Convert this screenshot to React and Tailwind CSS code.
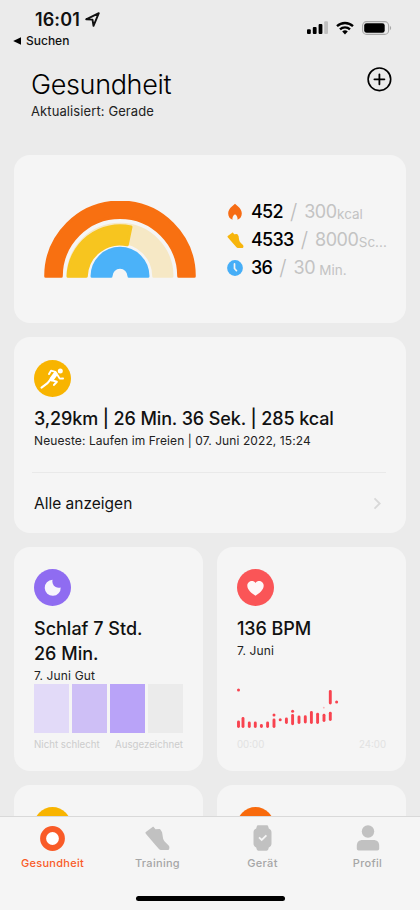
import React from "react";

const GOALS = [
  { id: "kcal", Icon: FlameIcon, value: "452", goal: "300", unit: "kcal" },
  { id: "steps", Icon: StepsIcon, value: "4533", goal: "8000", unit: "Sc..." },
  { id: "time", Icon: ClockIcon, value: "36", goal: "30", unit: "\u00a0Min." },
];

const SLEEP_COLORS = ["bg-[#e2daf8]", "bg-[#cebff6]", "bg-[#b9a3f8]", "bg-[#ebebeb]"];

// [x, top, bottom] of each pulse range
const PULSE = [
  [1.5, 34, 38.5], [6, 30.5, 38.5], [12.3, 35, 38.5], [18.3, 35, 38.5],
  [24.4, 37.5, 38.5], [30.6, 35, 38.5], [37, 32, 38.5], [49.4, 31, 34.5],
  [55.6, 27.5, 35.8], [62, 29, 34.5], [68.3, 28.8, 34], [74.4, 24.5, 34.5],
  [80.6, 26.2, 34.5], [87, 27.2, 32.5], [93.3, 25.2, 31.5], [93.3, 3.5, 15],
];

const PULSE_DOTS = [[1.5, 2], [37, 27], [43.2, 31.7], [55.6, 23.3], [99.6, 14]];

const TABS = [
  { id: "health", label: "Gesundheit", Icon: RingIcon, active: true },
  { id: "training", label: "Training", Icon: ShoeIcon },
  { id: "device", label: "Gerät", Icon: WatchIcon },
  { id: "profile", label: "Profil", Icon: PersonIcon },
];

function FlameIcon() {
  return (
    <svg width="16" height="18" viewBox="0 0 16 18">
      <path d="M8 .8c2.800 2.400 6.800 5.300 6.800 9.700 0 3-1.600 5.300-4.300 6.300.4-2.300-.5-4.300-2.500-5.600-2 1.300-2.900 3.300-2.500 5.600-2.700-1-4.300-3.300-4.300-6.300C1.200 6.100 5.200 3.200 8 .8z" fill="#f66c14" />
    </svg>
  );
}

function ShoePath() {
  return (
    <path
      d="M.8 5.800 7.300.9c.4-.3.900-.2 1.200.2l1.600 2 3.800-.3c.5 0 .8.200 1 .7l1.500 2.400.8 5.200c.2 1.500.8 2.800 1.900 4l3.600 3.600c.6.600.8 1.200.7 2l-.2 1.300c-.1.600-.5.900-1.100.9h-6.700c-.8 0-1.500-.3-2-.9l-3.200-3.500L.8 7.400c-.4-.5-.5-1.200 0-1.600z"
      fill="currentColor"
    />
  );
}

function StepsIcon() {
  return (
    <svg width="17" height="16" viewBox="0 0 24 23" className="text-[#f7b50c]">
      <ShoePath />
    </svg>
  );
}

function ShoeIcon() {
  return (
    <svg width="25" height="24" viewBox="0 0 24 23">
      <ShoePath />
    </svg>
  );
}

function ClockIcon() {
  return (
    <svg width="16" height="16" viewBox="0 0 16 16">
      <circle cx="8" cy="8" r="7.900" fill="#46aef7" />
      <path d="M7.500 3.900v4.600l2 2.200" fill="none" stroke="#f5f5f5" strokeWidth="1.700" strokeLinecap="round" strokeLinejoin="round" />
    </svg>
  );
}

function RingIcon() {
  return (
    <svg width="25" height="25" viewBox="0 0 25 25">
      <circle cx="12.500" cy="12.500" r="9.400" fill="#fff" stroke="currentColor" strokeWidth="6" />
    </svg>
  );
}

function WatchIcon() {
  return (
    <svg width="19" height="26" viewBox="0 0 19 26">
      <path d="M5.500.3h8c1 0 1.500.5 1.800 1.400l.5 1.800c1.700.7 2.700 2 2.700 3.900v11.200c0 1.900-1 3.200-2.700 3.900l-.5 1.800c-.3.900-.8 1.400-1.800 1.400h-8c-1 0-1.500-.5-1.800-1.400l-.5-1.800C1.500 21.800.5 20.500.5 18.600V7.400c0-1.900 1-3.200 2.700-3.900l.5-1.800C4 .8 4.500.3 5.500.3z" fill="currentColor" />
      <path d="m6 12.300 2.700 2.600 4.700-4.600" fill="none" stroke="#f5f5f5" strokeWidth="1.800" />
    </svg>
  );
}

function PersonIcon() {
  return (
    <svg width="24" height="26" viewBox="0 0 24 26">
      <circle cx="12" cy="6.500" r="6.200" fill="currentColor" />
      <path d="M.8 21c0-4 2-6 6-6h10.400c4 0 6 2 6 6v2.500c0 1.200-.7 1.900-1.900 1.900H2.700c-1.200 0-1.900-.7-1.900-1.900z" fill="currentColor" />
    </svg>
  );
}

function StatusBar() {
  return (
    <div className="flex items-start justify-between pt-[9px] pl-[13px] pr-[28px]">
      <div>
        <div className="flex h-[21px] items-center gap-[5px] pl-[22px]">
          <span className="text-[18px] leading-[21px] font-semibold tracking-[0.1px]">16:01</span>
          <svg width="15" height="15" viewBox="0 0 15 15">
            <path d="M1.200 7.300 13.800 1.200 8.500 13.800 7.500 7.600z" fill="none" stroke="#111" strokeWidth="1.900" strokeLinejoin="round" />
          </svg>
        </div>
        <div className="flex h-[21px] items-center gap-[5px]">
          <svg width="8" height="8" viewBox="0 0 8 8">
            <path d="M8 .2v7.600L.2 4z" />
          </svg>
          <span className="text-[12px] leading-[21px] font-medium">Suchen</span>
        </div>
      </div>
      <div className="flex h-[38px] items-center gap-[8px]">
        <svg width="21" height="14" viewBox="0 0 21 14">
          <rect x="0" y="8.300" width="3.800" height="4.700" rx="1" />
          <rect x="5.800" y="6" width="3.800" height="7" rx="1" />
          <rect x="11.600" y="3" width="3.800" height="10" rx="1" />
          <rect x="17.200" y="0.300" width="3.800" height="12.700" rx="1" fill="#c0c0c0" />
        </svg>
        <svg width="18" height="14" viewBox="0 0 18 14">
          <g fill="none" stroke="#000" strokeWidth="2.300">
            <path d="M1 5.200a11.600 11.600 0 0 1 16 0" />
            <path d="M4 8.400a7.200 7.200 0 0 1 10 0" />
          </g>
          <path d="M6.200 10.500a4.200 4.200 0 0 1 5.600 0L9 13.400z" />
        </svg>
        <svg width="30" height="14" viewBox="0 0 30 14">
          <rect x="0.600" y="0.600" width="26" height="12.800" rx="4" fill="none" stroke="#a8a8a8" strokeWidth="1.100" />
          <rect x="2.200" y="2.200" width="20.500" height="9.600" rx="2.400" />
          <path d="M27.900 4.800v4.400c1.700-.8 1.700-3.600 0-4.400z" fill="#a8a8a8" />
        </svg>
      </div>
    </div>
  );
}

function Header() {
  return (
    <header className="flex items-start justify-between pt-[17px] pr-[28px] pl-[31px]">
      <div className="pt-px">
        <h1 className="text-[27px] leading-[32px] font-light tracking-[-0.35px] text-black">Gesundheit</h1>
        <p className="text-[13px] leading-[21px] tracking-[0.1px] text-[#222]">Aktualisiert: Gerade</p>
      </div>
      <svg width="26" height="26" viewBox="0 0 26 26" fill="none" stroke="#000" strokeLinecap="round" className="-mt-[2px]">
        <circle cx="13.400" cy="13.300" r="11.300" strokeWidth="1.600" />
        <path d="M13.400 8.300v10M8.400 13.300h10" strokeWidth="1.800" />
      </svg>
    </header>
  );
}

function Rainbow() {
  return (
    <svg width="154" height="78" viewBox="-77 -76.800 154 78" strokeWidth="3" strokeLinejoin="round">
      <path d="M-74.300-1.500A74.300 74.300 0 0 1 74.300-1.500H58.700A58.700 58.700 0 0 0-58.700-1.500z" fill="#f87011" stroke="#f87011" />
      <path d="M-52-1.500A52 52 0 0 1 52-1.500H33.700A33.700 33.700 0 0 0-33.700-1.500z" fill="#f6e8c5" stroke="#f6e8c5" />
      <path d="M-52-1.500A52 52 0 0 1 11-50.800L7.300-33A33.700 33.700 0 0 0-33.700-1.500z" fill="#f7c51f" stroke="#f7c51f" />
      <path d="M-28-1.500A28 28 0 0 1 28-1.500H9A9 9 0 0 0-9-1.500z" fill="#4bb2f9" stroke="#4bb2f9" />
    </svg>
  );
}

function ActivityCard() {
  return (
    <section className="flex h-[168px] items-center rounded-[16px] bg-[#f5f5f5] pt-[2px] pl-[29px]">
      <Rainbow />
      <div className="ml-[29px]">
        {GOALS.map(({ id, Icon, value, goal, unit }) => (
          <div key={id} className="flex h-[28px] items-center text-[18px] leading-[28px] whitespace-nowrap">
            <span className="flex w-[18px] justify-center"><Icon /></span>
            <span className="ml-[7px] font-medium tracking-[-0.7px] text-black">{value}</span>
            <span className="ml-[7px] text-[21px] font-light text-[#bcbcbc]">/</span>
            <span className="ml-[7px] tracking-[-0.5px] text-[#c3c3c3]">{goal}</span>
            <span className="ml-[0.5px] pt-[3px] text-[13.5px] text-[#c3c3c3]">{unit}</span>
          </div>
        ))}
      </div>
    </section>
  );
}

function WorkoutCard() {
  return (
    <section className="h-[196px] rounded-[16px] bg-[#f5f5f5] pt-[23px] pr-[20px] pl-[20px]">
      <svg width="37" height="37" viewBox="0.500 0.500 37 37">
        <circle cx="19" cy="19" r="18.500" fill="#f8b400" />
        <g fill="none" stroke="#fff" strokeLinecap="round" strokeLinejoin="round">
          <path d="M22 14.500 18.300 19.500" strokeWidth="4.600" />
          <path d="M22 12.300 17.500 11.200 15.500 14.600" strokeWidth="1.900" />
          <path d="m24 15.500 2.200 3.600 3.400-.1" strokeWidth="1.800" />
          <path d="m18.500 20.800 4.800 1.400-2.800 3.200" strokeWidth="2.100" />
          <path d="m17 20-3 3.600-6 4.600" strokeWidth="2.100" />
        </g>
        <circle cx="26.800" cy="11.600" r="2.500" fill="#fff" />
      </svg>
      <h2 className="mt-[9px] text-[18px] leading-[26px] font-medium tracking-[-0.12px] whitespace-nowrap text-[#111]">3,29km | 26 Min. 36 Sek. | 285 kcal</h2>
      <p className="text-[12px] leading-[18px] tracking-[0.09px] whitespace-nowrap text-[#222]">Neueste: Laufen im Freien | 07. Juni 2022, 15:24</p>
      <div className="mt-[22px] -ml-[2px] h-px bg-[#e9e9e9]" />
      <div className="flex h-[61px] items-center justify-between pr-[4px]">
        <span className="pt-px text-[15.500px] leading-[22px] text-[#111]">Alle anzeigen</span>
        <svg width="9" height="13" viewBox="0 0 9 13">
          <path d="m1.500 1.300 5.200 5.200-5.200 5.200" fill="none" stroke="#d8d8d8" strokeWidth="1.800" />
        </svg>
      </div>
    </section>
  );
}

function SleepCard() {
  return (
    <section className="h-[224px] flex-1 rounded-[16px] bg-[#f5f5f5] px-[20px] pt-[22px]">
      <svg width="37" height="37" viewBox="0.500 0.500 37 37">
        <circle cx="19" cy="19" r="18.500" fill="#8f6cf1" />
        <path d="M19 11.300a8 8 0 1 0 8.200 7.600c-1.500.5-3.400.5-5-.3-2.800-1.400-3.800-4.700-3.200-7.300z" fill="#f7f5fc" />
      </svg>
      <h2 className="mt-[10px] text-[18px] leading-[25px] font-medium text-[#111]">Schlaf 7 Std.<br />26 Min.</h2>
      <p className="mt-px text-[12px] leading-[18px] tracking-[0.15px] text-[#222]">7. Juni Gut</p>
      <div className="-mt-px flex h-[49px] gap-[3.500px]">
        {SLEEP_COLORS.map((color) => (
          <div key={color} className={`flex-1 ${color}`} />
        ))}
      </div>
      <div className="mt-[4px] flex justify-between text-[9.700px] leading-[16px] text-[#cccccc]">
        <span>Nicht schlecht</span>
        <span>Ausgezeichnet</span>
      </div>
    </section>
  );
}

function PulseCard() {
  return (
    <section className="h-[224px] flex-1 rounded-[16px] bg-[#f5f5f5] px-[20px] pt-[22px]">
      <svg width="37" height="37" viewBox="0.500 0.500 37 37">
        <circle cx="19" cy="19" r="18.500" fill="#fa5557" />
        <path d="M19 27.300c-3.600-2.500-8.200-6-8.200-10.100 0-4.600 5.800-6.200 8.200-2.800 2.400-3.400 8.200-1.800 8.200 2.800 0 4.100-4.600 7.600-8.200 10.100z" fill="#fff7f7" />
      </svg>
      <h2 className="mt-[10px] text-[18px] leading-[25px] font-medium tracking-[-0.1px] text-[#111]">136 BPM</h2>
      <p className="mt-px text-[12px] leading-[18px] tracking-[0.15px] text-[#222]">7. Juni</p>
      <svg width="149" height="42" viewBox="0 0 149 42" className="mt-[28px]">
        <g stroke="#f8434f" strokeWidth="2.900" strokeLinecap="round">
          {PULSE.map(([x, top, bottom]) => (
            <path key={`${x}-${top}`} d={`M${x} ${top}V${bottom}`} />
          ))}
        </g>
        {PULSE_DOTS.map(([x, y]) => (
          <circle key={x} cx={x} cy={y} r="1.500" fill="#f8434f" />
        ))}
        <circle cx="86.800" cy="19.700" r="0.900" fill="#f9b4b9" />
      </svg>
      <div className="mt-[7px] flex justify-between text-[9.700px] leading-[16px] text-[#e2e2e2]">
        <span>00:00</span>
        <span>24:00</span>
      </div>
    </section>
  );
}

function TabBar() {
  return (
    <nav className="h-[94px] shrink-0 border-t border-[#d9d9d9] bg-[#f5f5f5]">
      <div className="flex pt-[8px]">
        {TABS.map(({ id, label, Icon, active }) => (
          <div key={id} className={`flex flex-1 flex-col items-center ${active ? "text-[#f95b28]" : "text-[#c1c1c1]"}`}>
            <span className="flex h-[26px] items-center"><Icon /></span>
            <span className={`mt-[4px] text-[11px] leading-[16px] font-medium tracking-[0.3px] ${active ? "" : "text-[#a6a6a6]"}`}>{label}</span>
          </div>
        ))}
      </div>
      <div className="mx-auto mt-[25px] h-[5px] w-[149px] rounded-full bg-black" />
    </nav>
  );
}

export default function App() {
  return (
    <div className="flex h-[910px] w-[420px] flex-col overflow-hidden bg-[#ebebeb] font-['Inter',sans-serif] text-[#111]">
      <div className="min-h-0 flex-1 overflow-hidden">
        <StatusBar />
        <Header />
        <main className="mt-[33px] flex flex-col gap-[14px] px-[14px]">
          <ActivityCard />
          <WorkoutCard />
          <div className="flex gap-[14px]">
            <SleepCard />
            <PulseCard />
          </div>
          <div className="flex gap-[14px]">
            <div className="h-[200px] flex-1 rounded-[16px] bg-[#f5f5f5] pt-[22px] pl-[20px]">
              <div className="size-[37px] rounded-full bg-[#f8b400]" />
            </div>
            <div className="h-[200px] flex-1 rounded-[16px] bg-[#f5f5f5] pt-[22px] pl-[20px]">
              <div className="size-[37px] rounded-full bg-[#f86a0c]" />
            </div>
          </div>
        </main>
      </div>
      <TabBar />
    </div>
  );
}
